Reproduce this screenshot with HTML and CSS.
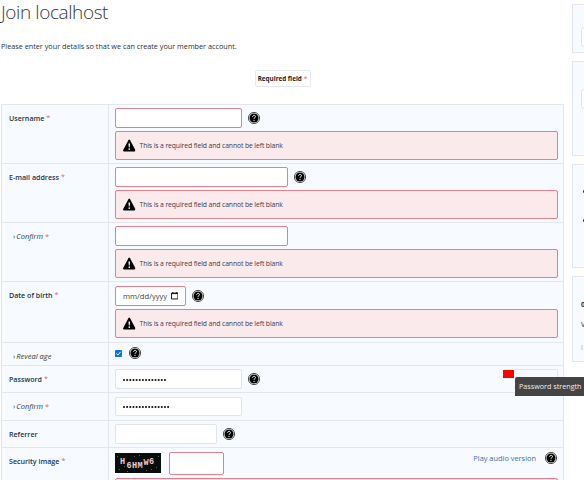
FILE: index.html
```html
<!DOCTYPE html>
<html lang="en">
<head>
<meta charset="utf-8">
<title>Join localhost</title>
<link rel="stylesheet" href="styles.css">
</head>
<body>
<svg class="defs" aria-hidden="true">
  <symbol id="help" viewBox="0 0 24 24"><circle cx="12" cy="12" r="11.2" fill="#fff" stroke="#000" stroke-width="1.4"/><circle cx="12" cy="12" r="9.1"/><path d="M9.2 9.6c0-3.8 5.9-3.7 5.7-.4-.1 2.3-2.9 2.2-2.9 4.4" fill="none" stroke="#fff" stroke-width="1.9"/><circle cx="12" cy="16.6" r="1.3" fill="#fff"/></symbol>
  <symbol id="warn" viewBox="0 0 24 24"><path d="M10.6 1.3Q12 -.5 13.4 1.3L23.6 20.5Q24.5 23.5 21.8 23.7H2.2Q-.5 23.5.4 20.5Z"/><path d="M10.5 8h3l-.6 7.7h-1.8z" fill="#fff"/><circle cx="12" cy="19" r="1.6" fill="#fff"/></symbol>
</svg>
<div class="page">
  <main class="main">
    <h1>Join localhost</h1>
    <p class="intro">Please enter your details so that we can create your member account.</p>
    <div class="legend"><span class="required-key"><span>Required field</span> <i class="star">*</i></span></div>
    <form class="form">
      <div class="row tall">
        <div class="label"><span>Username</span><i class="star">*</i></div>
        <div class="field">
          <div class="line"><span class="input medium bad"></span><svg class="help"><use href="#help"/></svg></div>
          <div class="error"><svg><use href="#warn"/></svg><span>This is a required field and cannot be left blank</span></div>
        </div>
      </div>
      <div class="row tall">
        <div class="label"><span>E-mail address</span><i class="star">*</i></div>
        <div class="field">
          <div class="line"><span class="input large bad"></span><svg class="help"><use href="#help"/></svg></div>
          <div class="error"><svg><use href="#warn"/></svg><span>This is a required field and cannot be left blank</span></div>
        </div>
      </div>
      <div class="row tall">
        <div class="label sub"><b>›</b><em>Confirm</em><i class="star">*</i></div>
        <div class="field">
          <div class="line"><span class="input large bad"></span></div>
          <div class="error"><svg><use href="#warn"/></svg><span>This is a required field and cannot be left blank</span></div>
        </div>
      </div>
      <div class="row birth">
        <div class="label"><span>Date of birth</span><i class="star">*</i></div>
        <div class="field">
          <div class="line"><span class="input date bad"><span>mm/dd/yyyy</span><svg viewBox="0 0 7 7"><path d="M.5 1h6v5.5h-6zM.5 1.5h6M1.7 0v1M5.3 0v1" fill="none" stroke="#111" stroke-width=".9"/></svg></span><svg class="help"><use href="#help"/></svg></div>
          <div class="error"><svg><use href="#warn"/></svg><span>This is a required field and cannot be left blank</span></div>
        </div>
      </div>
      <div class="row reveal">
        <div class="label sub"><b>›</b><em>Reveal age</em></div>
        <div class="field"><div class="line"><svg class="check" viewBox="0 0 7 7"><rect width="7" height="7" rx=".8" fill="#0b74e5"/><path d="M1.4 3.6 2.9 5 5.6 1.9" fill="none" stroke="#fff" stroke-width="1"/></svg><svg class="help"><use href="#help"/></svg></div></div>
      </div>
      <div class="row password">
        <div class="label"><span>Password</span><i class="star">*</i></div>
        <div class="field"><div class="line"><span class="input medium dots"><svg width="44" height="3"><path d="M1 2h41.6"/></svg></span><svg class="help"><use href="#help"/></svg>
          <div class="strength"><div class="level"></div><div class="track"></div><div class="tooltip">Password strength</div></div></div></div>
      </div>
      <div class="row again">
        <div class="label sub"><b>›</b><em>Confirm</em><i class="star">*</i></div>
        <div class="field"><div class="line"><span class="input medium dots"><svg width="47" height="3"><path d="M1 2h44.8"/></svg></span></div></div>
      </div>
      <div class="row referrer">
        <div class="label"><span>Referrer</span></div>
        <div class="field"><div class="line"><span class="input small"></span><svg class="help"><use href="#help"/></svg></div></div>
      </div>
      <div class="row security">
        <div class="label"><span>Security image</span><i class="star">*</i></div>
        <div class="field">
          <div class="line">
            <svg class="captcha" viewBox="0 0 46 20"><rect width="46" height="20" fill="#080d09"/><g fill="#8a9a8c"><path d="M2 3h1v1H2zM4 16h1v1H4zM9 13h1v1H9zM19 3h1v1h-1zM24 2h1v1h-1zM36 16h1v1h-1zM41 14h1v1h-1zM43 3h1v1h-1zM31 17h1v1h-1zM12 18h1v1h-1z" opacity=".6"/></g><g class="code"><text x="5" y="10.5">H</text><text x="11.5" y="15">6</text><text x="17" y="14.5">H</text><text x="22.5" y="15">M</text><text x="28.5" y="11.5">W</text><text x="34" y="10.5">6</text></g></svg>
            <span class="input code-input bad"></span>
            <a class="audio">Play audio version</a><svg class="help"><use href="#help"/></svg>
          </div>
          <div class="error"></div>
        </div>
      </div>
    </form>
  </main>
  <aside class="side">
    <section class="panel search"><div class="side-input"></div></section>
    <section class="panel login"><div class="side-input"></div></section>
    <section class="panel links"><i></i><i></i></section>
    <section class="panel stats"><b>0</b><span>V</span><small>i</small></section>
  </aside>
</div>
</body>
</html>
```
FILE: styles.css
```css
* { box-sizing: border-box; }
body { margin: 0; background: #fff; color: #2b3038; font: 7px/10px "Open Sans", "Noto Sans", sans-serif; }
.defs { position: absolute; width: 0; height: 0; }
.page { display: flex; gap: 8px; width: 584px; height: 480px; padding-left: 1px; overflow: hidden; }
.main { flex: 0 0 563px; }
h1 { margin: 0; height: 40px; font-size: 19px; letter-spacing: -.4px; line-height: 24px; font-weight: 300; color: #33363a; white-space: nowrap; }
.intro { margin: 0; height: 30px; font-size: 7.25px; line-height: 12px; white-space: nowrap; }
.legend { display: flex; justify-content: center; height: 34px; }
.required-key { display: flex; align-items: center; justify-content: center; gap: 2px; width: 56px; height: 17px; border: 1px solid #e7eaed; border-radius: 2px; font-weight: 700; font-size: 6.3px; color: #1d2025; white-space: nowrap; }
.star { color: #e35d68; font-style: normal; font-weight: 400; margin-left: 2px; }
.required-key .star { margin-left: 0; }
.form { border: 1px solid #e4e7ea; background: #f7fbff; }
.row { display: grid; grid-template-columns: 107px 1fr; height: 59px; border-bottom: 1px solid #e4e7ea; }
.label { display: flex; height: 100%; padding: 8px 0 0 7px; border-right: 1px solid #e4e7ea; color: #20364c; font-size: 7.1px; font-weight: 600; white-space: nowrap; }
.sub { padding: 8px 0 0 11px; font-size: 7.5px; font-weight: 400; color: #2f3b47; }
.sub b { font-weight: 400; margin-right: 1px; }
.field { padding: 3px 5px 0 6px; min-width: 0; }
.line { display: flex; align-items: center; height: 20px; }
.input { flex: none; display: flex; align-items: center; height: 20px; border: 1px solid #e1e5e8; border-radius: 2px; background: #fff; padding: 0 7px; }
.bad { border-color: #e4808b; }
.medium { width: 127px; }
.large { width: 173.4px; }
.small { width: 102px; }
.date { width: 71px; padding-right: 7px; justify-content: space-between; font-size: 7.6px; color: #444; }
.date svg { width: 7.5px; height: 7.5px; }
.help { flex: none; width: 12px; height: 12px; margin-left: 6px; }
.error { display: flex; align-items: center; gap: 4px; height: 29px; margin-top: 3px; padding: 0 7px; border: 1px solid #e4808b; border-radius: 2px; background: #fbeaeb; color: #3e3b4c; font-size: 6.8px; letter-spacing: -.1px; white-space: nowrap; }
.error svg { width: 12.5px; height: 13px; }
.birth { height: 61px; }
.birth .field { padding-top: 4px; }
.reveal { height: 23px; }
.reveal .field { padding-top: 0; }
.check { width: 7px; height: 7px; }
.reveal .help { margin-left: 6.5px; }
.password { height: 27px; }
.dots svg { overflow: visible; }
.dots path { stroke: #111; stroke-width: 2.1; stroke-linecap: round; stroke-dasharray: 0 3.15; fill: none; }
.strength { position: relative; display: flex; margin-left: auto; align-self: flex-start; width: 55px; height: 10px; }
.level { width: 11px; height: 8px; margin-top: 1px; background: #f00; }
.track { width: 44px; height: 19px; border: 1px solid #e4e7ea; border-left: 0; }
.tooltip { position: absolute; left: 12px; top: 8px; width: 80px; height: 19px; padding-left: 4px; border-radius: 2px 0 0 0; background: #444; color: #eee; font-size: 7.2px; line-height: 19px; white-space: nowrap; }
.again { height: 28px; }
.again .field { padding-top: 4px; }
.again .line { height: 19px; }
.again .input { height: 19px; }
.referrer { height: 27px; }
.security { height: 60px; }
.security .field { padding-top: 4px; }
.security .line { height: 23px; }
.captcha { width: 46px; height: 20px; margin: 1px 8px 0 0; align-self: flex-start; }
.code { font: 700 8.5px "Liberation Mono", monospace; fill: #e5cbd9; }
.code-input { width: 55px; height: 23px; }
.audio { margin-left: auto; align-self: flex-start; font-size: 7.4px; line-height: 12px; color: #4470a5; }
.security .help { margin-left: 9px; margin-right: 1px; align-self: flex-start; }
.side { flex: none; width: 140px; padding-top: 4px; }
.panel { border: 1px solid #e4e7ea; background: #f7fbff; margin-bottom: 8px; padding-left: 8px; }
.side-input { height: 20px; border: 1px solid #e1e5e8; border-radius: 3px; background: #fff; }
.search { height: 49px; padding-top: 22px; }
.login { height: 95px; padding-top: 27px; }
.links { height: 104px; padding: 25px 0 0 10px; }
.links i { display: block; width: 3px; height: 3px; margin-bottom: 26px; border-radius: 50%; background: #223; }
.stats { height: 86px; padding-top: 23px; }
.stats b, .stats span, .stats small { display: block; height: 20px; font-size: 7px; }
.stats small { padding-top: 3px; color: #99a; }
```
